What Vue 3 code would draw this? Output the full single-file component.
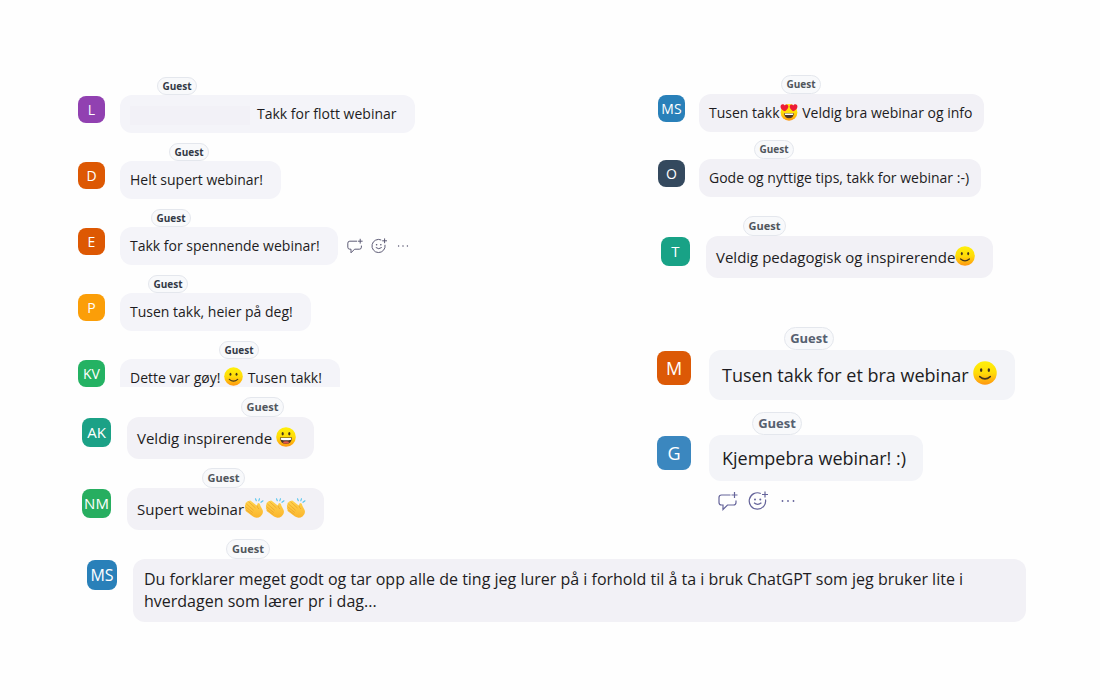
<script setup>
const left = [
  { size: 'sm', initials: 'L', color: '#9141b1', name: 37, redacted: true, parts: ['Takk for flott webinar'] },
  { size: 'sm', initials: 'D', color: '#dd5803', name: 49, parts: ['Helt supert webinar!'] },
  { size: 'sm', initials: 'E', color: '#dd5803', name: 31, actions: 'beside', parts: ['Takk for spennende webinar!'] },
  { size: 'sm', initials: 'P', color: '#fb9e08', name: 28, parts: ['Tusen takk, heier på deg!'] },
  { size: 'sm', initials: 'KV', color: '#24b263', name: 99, cut: true, parts: ['Dette var gøy! ', { emoji: 'smile' }, ' Tusen takk!'] },
  { size: 'md', initials: 'AK', color: '#1ba186', name: 114, parts: ['Veldig inspirerende ', { emoji: 'grin' }] },
  { size: 'md', initials: 'NM', color: '#27ae60', name: 75, parts: ['Supert webinar', { emoji: 'clap' }, { emoji: 'clap' }, { emoji: 'clap' }] },
]
const right = [
  { size: 'xs', initials: 'MS', color: '#2980b9', name: 82, parts: ['Tusen takk', { emoji: 'love' }, ' Veldig bra webinar og info'] },
  { size: 'xs', initials: 'O', color: '#34495e', name: 55, parts: ['Gode og nyttige tips, takk for webinar :-)'] },
  { size: 'md', spaced: true, initials: 'T', color: '#18a286', name: 37, parts: ['Veldig pedagogisk og inspirerende', { emoji: 'smile' }] },
  { size: 'xl', spaced: true, initials: 'M', color: '#dc5906', name: 75, parts: ['Tusen takk for et bra webinar ', { emoji: 'smile' }] },
  { size: 'xl', initials: 'G', color: '#3b87bf', name: 43, actions: 'below', parts: ['Kjempebra webinar! :)'] },
]
const last = [
  { size: 'lg', initials: 'MS', color: '#2980b9', name: 93, parts: ['Du forklarer meget godt og tar opp alle de ting jeg lurer på i forhold til å ta i bruk ChatGPT som jeg bruker lite i hverdagen som lærer pr i dag...'] },
]
const columns = [
  { id: 'left', messages: left },
  { id: 'right', messages: right },
  { id: 'last', messages: last },
]
</script>

<template>
  <svg class="defs" width="0" height="0" aria-hidden="true">
    <defs>
      <linearGradient id="face" x1="0" y1="0" x2="0" y2="1">
        <stop offset="0" stop-color="#fff00a" />
        <stop offset="0.5" stop-color="#ffdc08" />
        <stop offset="1" stop-color="#ff9612" />
      </linearGradient>
      <linearGradient id="hand" x1="0" y1="0" x2="0" y2="1">
        <stop offset="0" stop-color="#ffd44f" />
        <stop offset="1" stop-color="#fbb52c" />
      </linearGradient>
    </defs>
    <symbol id="smile" viewBox="0 0 20 20">
      <circle cx="10" cy="10" r="9.8" fill="url(#face)" />
      <ellipse cx="6.8" cy="7.6" rx="1" ry="1.6" fill="#44351d" />
      <ellipse cx="13.2" cy="7.6" rx="1" ry="1.6" fill="#44351d" />
      <path d="M5.6 13Q10 16.8 14.4 13" fill="none" stroke="#44351d" stroke-width="1.300" stroke-linecap="round" />
    </symbol>
    <symbol id="grin" viewBox="0 0 20 20">
      <circle cx="10" cy="10" r="9.8" fill="url(#face)" />
      <ellipse cx="6.7" cy="6.8" rx="1.1" ry="1.7" fill="#44351d" />
      <ellipse cx="13.3" cy="6.8" rx="1.1" ry="1.7" fill="#44351d" />
      <path d="M4 10.5H16Q15.8 16.8 10 16.8Q4.2 16.8 4 10.5Z" fill="#4b3425" />
      <path d="M4.8 11H15.2V12.8Q10 13.8 4.8 12.8Z" fill="#fff" />
      <ellipse cx="10" cy="15.4" rx="3" ry="1.2" fill="#e2574c" />
    </symbol>
    <symbol id="love" viewBox="0 0 20 20">
      <circle cx="10" cy="10.5" r="9.3" fill="url(#face)" />
      <path d="M5.500 9.300C1 7.500 0 4.500 1 2.500C2 .8 4.400 1 5.200 2.700C6.500 1 9 1.500 9.300 3.700C9.500 6 7.500 8 5.500 9.300Z" fill="#ed1c35" />
      <path d="M14.500 9.300C19 7.500 20 4.500 19 2.500C18 .8 15.600 1 14.800 2.700C13.500 1 11 1.500 10.700 3.700C10.500 6 12.500 8 14.500 9.300Z" fill="#ed1c35" />
      <path d="M4.500 11.500H15.500Q15 17 10 17Q5 17 4.500 11.500Z" fill="#4b3425" />
      <path d="M5.200 11.800H14.800L14.300 13.200H5.700Z" fill="#fff" />
    </symbol>
    <symbol id="clap" viewBox="0 0 20 20">
      <path d="M1.500 6.200Q1.200 4.800 2.600 4.300Q3.100 2.800 4.600 3.300Q6 2 7.300 3.200L13 7.800Q12.900 4.800 14.600 4.900Q16 5 16.500 8L18.600 12Q19.800 15.800 16.800 18.200Q13 21 9 18.600L2.200 13.500Q1 12.400 1.700 11.500Q.2 10.300 1.300 9Q.4 7.300 1.500 6.200Z" fill="url(#hand)" />
      <path d="M2.500 6L9.300 12M1.800 8.800L8.500 14.300M4.600 3.800L11.200 9.700M2.200 11.700L8 16.200M13 7.800Q13.200 9.400 14.600 10.700" fill="none" stroke="#e8a02a" stroke-width=".7" stroke-linecap="round" />
      <path d="M12.300 2.800L11.500 .8M14.800 2.800L15.500 .7M17 4.300L19 2.800" fill="none" stroke="#55c4ee" stroke-width="1.100" stroke-linecap="round" />
    </symbol>
    <symbol id="reply" viewBox="0 0 20 20">
      <path d="M12.500 4H3.500Q1 4 1 6.500V11.500Q1 14 3.500 14H5V18.500L9.500 14H15.500Q18 14 18 11.500V9.500M16.500 1V7M13.500 4H19.500" fill="none" stroke="currentColor" stroke-width="1.200" />
    </symbol>
    <symbol id="react" viewBox="0 0 20 20">
      <path d="M12.8 2.500A8.200 8.200 0 1 0 17.500 8.500M17 .5V6.500M14 3.500H20M6 11.800Q9.700 15 13.400 11.800" fill="none" stroke="currentColor" stroke-width="1.200" />
      <circle cx="7" cy="8.500" r="1" fill="currentColor" />
      <circle cx="12.300" cy="8.500" r="1" fill="currentColor" />
    </symbol>
    <symbol id="more" viewBox="0 0 20 20">
      <circle cx="4.500" cy="10" r=".9" fill="currentColor" />
      <circle cx="10" cy="10" r=".9" fill="currentColor" />
      <circle cx="15.500" cy="10" r=".9" fill="currentColor" />
    </symbol>
  </svg>
  <main class="board">
    <section v-for="column in columns" :key="column.id" :class="column.id">
      <article
        v-for="(message, index) in column.messages"
        :key="index"
        class="message"
        :class="[message.size, { spaced: message.spaced, cut: message.cut }]"
      >
        <span class="badge" :style="{ marginLeft: message.name + 'px' }">Guest</span>
        <span class="avatar" :style="{ backgroundColor: message.color }">{{ message.initials }}</span>
        <div class="body" :class="message.actions">
          <p class="bubble"><span v-if="message.redacted" class="redacted"></span><template v-for="(part, n) in message.parts" :key="n"><svg v-if="part.emoji" class="emoji" aria-hidden="true"><use :href="'#' + part.emoji" /></svg><span v-else class="words">{{ part }}</span></template></p>
          <div v-if="message.actions" class="actions">
            <button type="button" aria-label="Reply"><svg><use href="#reply" /></svg></button>
            <button type="button" aria-label="Add reaction"><svg><use href="#react" /></svg></button>
            <button type="button" aria-label="More options"><svg><use href="#more" /></svg></button>
          </div>
        </div>
      </article>
    </section>
  </main>
</template>

<style>
body {
  margin: 0;
  background: #fefefe;
}
</style>

<style scoped>
.defs {
  position: absolute;
}
.board {
  display: grid;
  grid-template-columns: 579fr 369fr;
  padding: 75px 74px 48px 78px;
  font-family: "Open Sans", "Noto Sans", sans-serif;
  color: #1d1c22;
}
.left {
  padding-top: 2px;
}
.last {
  grid-column: 1 / -1;
}
.message {
  --avatar: 27px;
  --gap: 15px;
  --head: 18px;
  --text: 14px;
  --line: 38px;
  --pad: 10px;
  --end: 18px;
  --radius: 12px;
  --badge: 40px;
  --badge-text: 10px;
  --badge-color: #333946;
  --emoji: 19px;
  --fill: #f4f4f9;
  display: grid;
  grid-template-columns: var(--avatar) minmax(0, 1fr);
  grid-template-rows: var(--head) auto;
  column-gap: var(--gap);
  margin-bottom: 10px;
}
.xs {
  --gap: 14px;
  --head: 19px;
  --end: 12px;
  --badge-color: #50565c;
  --emoji: 18px;
  --fill: #f2f1f6;
  margin: 0 0 8px 1px;
}
.md {
  --avatar: 29px;
  --gap: 16px;
  --head: 20px;
  --text: 15px;
  --line: 42px;
  --end: 17px;
  --badge: 43px;
  --badge-text: 11px;
  --badge-color: #50565c;
  --emoji: 20px;
  --fill: #f2f1f6;
  margin: 0 0 9px 4px;
}
.lg {
  --avatar: 30px;
  --gap: 16px;
  --head: 20px;
  --text: 16px;
  --line: 22px;
  --badge: 44px;
  --badge-text: 11px;
  --badge-color: #50565c;
  --fill: #f2f1f6;
  margin: 0 0 0 9px;
}
.xl {
  --avatar: 34px;
  --gap: 18px;
  --head: 23px;
  --text: 18px;
  --line: 50px;
  --pad: 13px;
  --end: 17px;
  --badge: 50px;
  --badge-text: 13px;
  --badge-color: #566070;
  --emoji: 24px;
  --fill: #f3f4f8;
  margin-bottom: 12px;
}
.md.spaced {
  margin-top: 19px;
}
.xl.spaced {
  margin-top: 49px;
}
.badge {
  grid-column: 2;
  justify-self: start;
  box-sizing: border-box;
  width: var(--badge);
  height: var(--head);
  border: 1px solid #e4e7ed;
  border-radius: 12px;
  background: #f8f9fb;
  color: var(--badge-color);
  font-size: var(--badge-text);
  font-weight: 700;
  line-height: calc(var(--head) - 2px);
  text-align: center;
}
.avatar {
  grid-column: 1;
  height: var(--avatar);
  margin-top: 1px;
  border-radius: 8px;
  color: #fff;
  font-size: var(--text);
  line-height: var(--avatar);
  text-align: center;
}
.body {
  display: flex;
}
.bubble {
  margin: 0;
  padding: 0 var(--end) 0 var(--pad);
  border-radius: var(--radius);
  background: var(--fill);
  font-size: var(--text);
  line-height: var(--line);
}
.words {
  white-space: pre-wrap;
}
.lg .bubble {
  flex: 1;
  padding: 9px 30px 10px 11px;
}
.cut .bubble {
  height: 28px;
  overflow: hidden;
  border-radius: 12px 12px 0 0;
}
.redacted {
  display: inline-block;
  width: 120px;
  height: 19px;
  margin-right: 7px;
  background: #f2f1f7;
  vertical-align: middle;
}
.emoji {
  width: var(--emoji);
  height: var(--emoji);
  margin-right: 1px;
  vertical-align: -3px;
}
.below {
  flex-direction: column;
  align-items: flex-start;
}
.below .bubble {
  line-height: 46px;
}
.actions {
  display: flex;
  align-items: center;
  gap: 8px;
  margin-left: 9px;
}
.actions button {
  display: flex;
  padding: 0;
  border: 0;
  background: none;
  color: #56546f;
}
.actions svg {
  width: 16px;
  height: 16px;
}
.below .actions {
  gap: 10px;
  margin: 10px 0 0 9px;
}
.below .actions button {
  color: #65649a;
}
.below .actions svg {
  width: 20px;
  height: 20px;
}
</style>
